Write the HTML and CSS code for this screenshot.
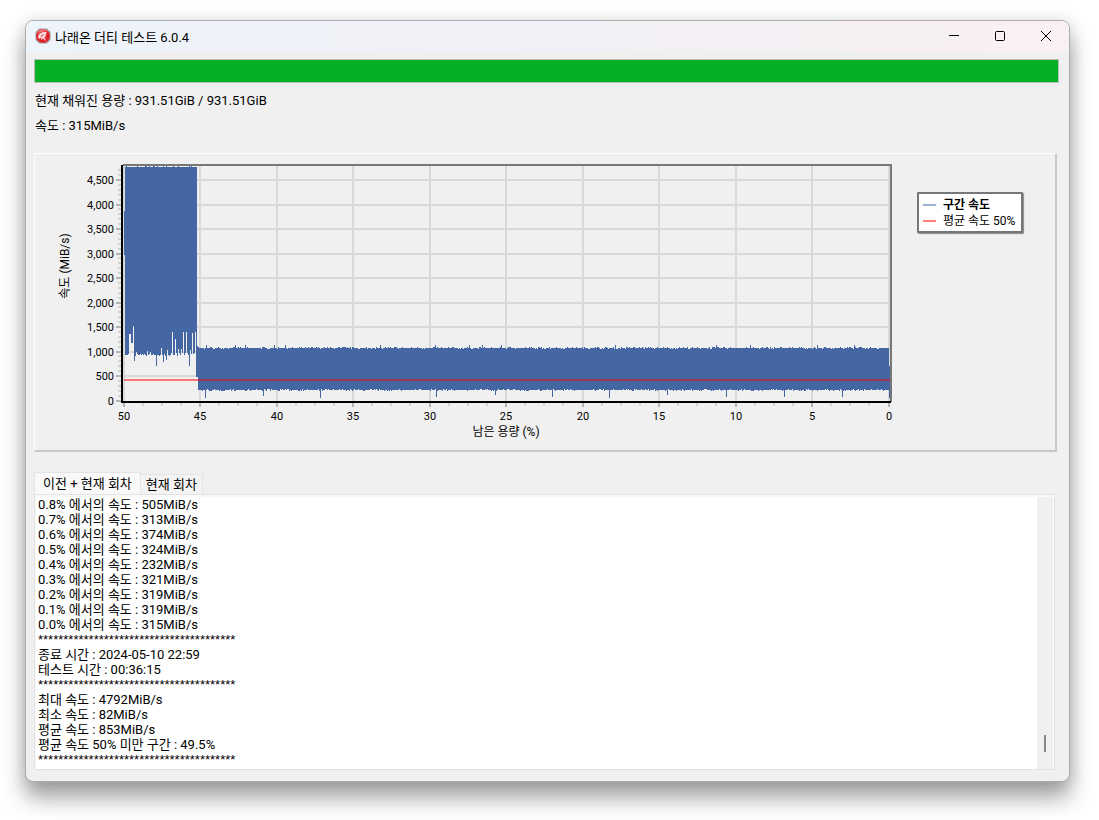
FILE: index.html
```html
<!DOCTYPE html>
<html lang="ko">
<head>
    <meta charset="UTF-8">
    <meta name="viewport" content="width=device-width, initial-scale=1.0">
    <title>나래온 더티 테스트 6.0.4</title>
    <link rel="stylesheet" href="styles.css">
</head>
<body>

<div class="window">
    <header class="titlebar">
        <svg class="app-icon" viewBox="0 0 16 16" aria-hidden="true">
            <path d="M4 0.500H12L15.500 4V12L12 15.500H4L0.500 12V4Z" fill="#a4a4a8"/>
            <circle cx="8" cy="8" r="7" fill="#df252c"/>
            <path d="M2 6A6.500 6.500 0 0 1 13 3.500C9 3 5 4 2 6Z" fill="#f3777a"/>
            <path d="M3 9.500C3 6 7 3 12 4.500L10.500 6L12 6.500L10 7.500L11 9L9.500 9L11 13L8 10.500L6.500 12L6 9.500L4.500 11Z" fill="#fbd9d9"/>
            <path d="M6 8.500L8.500 6.500" stroke="#df252c" stroke-width="1"/>
        </svg>
        <h1>나래온 더티 테스트 6.0.4</h1>
        <div class="window-buttons">
            <button type="button" aria-label="최소화">
                <svg viewBox="0 0 12 12"><path d="M1 5.500H11"/></svg>
            </button>
            <button type="button" aria-label="최대화">
                <svg viewBox="0 0 12 12"><rect x="1.500" y="1.500" width="9" height="9" rx="1"/></svg>
            </button>
            <button type="button" aria-label="닫기">
                <svg viewBox="0 0 12 12"><path d="M1 1L11 11M11 1L1 11"/></svg>
            </button>
        </div>
    </header>

    <main>
        <progress value="100" max="100" aria-label="진행률"></progress>
        <div class="status">
            <p>현재 채워진 용량 : 931.51GiB / 931.51GiB</p>
            <p>속도 : 315MiB/s</p>
        </div>

        <section class="chart-panel">
            <svg class="chart" viewBox="0 0 870 296" role="img" aria-label="구간 속도">
                <g id="grid" class="grid"></g>
                <g id="ticks" class="ticks"></g>
                <path class="frame" d="M88 11H856V248"/>
                <path id="speed" class="speed"/>
                <path class="average" d="M89 226H855"/>
                <path class="axis" d="M87 11V248H856"/>
                <g id="labels" class="labels"></g>
                <text class="axis-title" x="471" y="282">남은 용량 (%)</text>
                <text class="axis-title" transform="translate(34 112) rotate(-90)">속도 (MiB/s)</text>
            </svg>
            <ul class="legend">
                <li class="series-speed">구간 속도</li>
                <li class="series-average">평균 속도 50%</li>
            </ul>
        </section>

        <section class="result">
            <div class="tabs" role="tablist">
                <button type="button" class="tab active" role="tab" aria-selected="true">이전 + 현재 회차</button>
                <button type="button" class="tab" role="tab" aria-selected="false">현재 회차</button>
            </div>
            <div class="tab-page" role="tabpanel">
                <div class="log" role="log">
                    <p>0.8% 에서의 속도 : 505MiB/s</p>
                    <p>0.7% 에서의 속도 : 313MiB/s</p>
                    <p>0.6% 에서의 속도 : 374MiB/s</p>
                    <p>0.5% 에서의 속도 : 324MiB/s</p>
                    <p>0.4% 에서의 속도 : 232MiB/s</p>
                    <p>0.3% 에서의 속도 : 321MiB/s</p>
                    <p>0.2% 에서의 속도 : 319MiB/s</p>
                    <p>0.1% 에서의 속도 : 319MiB/s</p>
                    <p>0.0% 에서의 속도 : 315MiB/s</p>
                    <p class="stars">***************************************</p>
                    <p>종료 시간 : 2024-05-10 22:59</p>
                    <p>테스트 시간 : 00:36:15</p>
                    <p class="stars">***************************************</p>
                    <p>최대 속도 : 4792MiB/s</p>
                    <p>최소 속도 : 82MiB/s</p>
                    <p>평균 속도 : 853MiB/s</p>
                    <p>평균 속도 50% 미만 구간 : 49.5%</p>
                    <p class="stars">***************************************</p>
                </div>
                <div class="scrollbar"><div class="thumb"></div></div>
            </div>
        </section>
    </main>
</div>

<script>
    // plot area inside the svg
    const LEFT = 89, RIGHT = 854, TOP = 12, BOTTOM = 247;

    function toX(percent) {
        return Math.floor(RIGHT - percent * (RIGHT - LEFT) / 50);
    }

    function toY(speed) {
        return Math.floor(BOTTOM - speed * 0.049);
    }

    function path(parent, d, className) {
        const el = document.createElementNS('http://www.w3.org/2000/svg', 'path');
        el.setAttribute('d', d);
        if (className) el.setAttribute('class', className);
        document.getElementById(parent).appendChild(el);
    }

    function label(text, x, y, anchor) {
        const el = document.createElementNS('http://www.w3.org/2000/svg', 'text');
        el.setAttribute('x', x);
        el.setAttribute('y', y);
        el.setAttribute('text-anchor', anchor);
        el.textContent = text;
        document.getElementById('labels').appendChild(el);
    }

    for (let speed = 0; speed <= 4700; speed += 100) {
        const y = toY(speed);
        if (speed % 500 === 0) {
            if (speed > 0) path('grid', `M${LEFT} ${y}H${RIGHT}`);
            path('ticks', `M81 ${y}H86`);
            label(speed.toLocaleString('en-US'), 79, y + 4, 'end');
        } else {
            path('ticks', `M83 ${y}H86`, 'minor');
        }
    }

    for (let percent = 0; percent <= 50; percent += 1.25) {
        const x = toX(percent);
        if (percent % 5 === 0) {
            path('grid', `M${x} ${TOP}V${BOTTOM}`);
            path('ticks', `M${x} 249V253`);
            label(percent, x, 266, 'middle');
        } else {
            path('ticks', `M${x} 249V252`, 'minor');
        }
    }

    // fixed seed so the graph is the same on every load
    let seed = 7;
    function random() {
        seed = (seed * 16807) % 2147483647;
        return seed / 2147483647;
    }

    // lower ends of the cache section, one per column
    const cacheLow = [
        201, 201, 201, 200, 180, 180, 189, 189, 172, 207, 202, 198, 200, 201, 201,
        200, 201, 200, 201, 200, 201, 202, 197, 201, 200, 198, 201, 201, 200, 201,
        201, 212, 201, 201, 202, 201, 194, 201, 208, 200, 202, 206, 196, 201, 202,
        201, 199, 178, 201, 201, 185, 199, 202, 195, 199, 201, 195, 199, 178, 201,
        199, 178, 199, 201, 212, 196, 200, 179, 200, 199, 178, 201
    ];
    let bars = 'M89 57h1v44h-1z';
    cacheLow.forEach((low, i) => {
        const top = random() > 0.8 ? 12 : 13;
        bars += `M${90 + i} ${top}h1V${low}h-1z`;
    });
    bars += 'M161 192h2v31h-2z';

    // short drops, column: lower end
    const drops = {170: 244, 228: 242, 285: 244, 401: 243, 460: 241, 517: 243, 574: 244, 632: 241, 691: 243, 749: 243, 807: 243};
    for (let x = 163; x < 854; x++) {
        const r = random();
        const top = r > 0.98 ? 191 : r > 0.8 ? 193 : r > 0.1 ? 194 : 195;
        const s = random();
        const low = drops[x] || (s > 0.85 ? 237 : s > 0.15 ? 236 : 235);
        bars += `M${x} ${top}h1V${low}h-1z`;
    }
    bars += 'M854 212h1v32h-1z';
    document.getElementById('speed').setAttribute('d', bars);
</script>

</body>
</html>
```

FILE: styles.css
```css
* {
    box-sizing: border-box;
}

body {
    margin: 0;
    padding: 20px 29px 38px 25px;
    background-color: #fff;
    color: #000;
    font-family: Roboto, "Noto Sans CJK KR", sans-serif;
    font-size: 13px;
}

p, h1, ul {
    margin: 0;
    padding: 0;
}

button {
    font-family: inherit;
    font-size: 13px;
    color: #000;
    padding: 0;
    border: none;
    background: none;
}

.window {
    background-color: #f0f0f0;
    border: 1px solid #acacac;
    border-radius: 8px;
    box-shadow: 0 16px 22px rgba(0, 0, 0, 0.36), 0 0 16px rgba(0, 0, 0, 0.12);
    overflow: hidden;
}

.titlebar {
    display: flex;
    align-items: center;
    height: 30px;
    padding-left: 9px;
    background: linear-gradient(to right, #edf4fa, #f3f0f6 60%, #f9f0f1);
}

.app-icon {
    width: 16px;
    height: 16px;
    margin-right: 4px;
}

h1 {
    font-size: 13px;
    font-weight: normal;
}

.window-buttons {
    display: flex;
    margin-left: auto;
}

.window-buttons button {
    display: flex;
    align-items: center;
    justify-content: center;
    width: 46px;
    height: 28px;
}

.window-buttons svg {
    width: 12px;
    height: 12px;
    fill: none;
    stroke: #000;
}

main {
    padding: 8px 10px 11px 8px;
}

progress {
    display: block;
    width: 100%;
    height: 24px;
    appearance: none;
    border: 1px solid #bcbcbc;
}

progress::-webkit-progress-bar {
    background-color: #e6e6e6;
}

progress::-webkit-progress-value {
    background-color: #06b025;
}

.status {
    margin: 5px 0 15px 1px;
    line-height: 25px;
}

/* chart */
.chart-panel {
    display: flex;
    align-items: flex-start;
    margin-right: 2px;
    border: 1px solid #fff;
    border-right: 2px solid #c8c8c8;
    border-bottom: 2px solid #c8c8c8;
}

.chart {
    display: block;
    flex: 1;
    min-width: 0;
    font-size: 11px;
}

.chart path {
    stroke-width: 2;
    fill: none;
}

.chart .grid path {
    stroke: #d8d8d8;
}

.chart .ticks path {
    stroke: #b4b4b4;
}

.chart .ticks .minor {
    stroke: #b4b4b4;
    stroke-width: 1;
}

.chart .frame {
    stroke: #777;
}

.chart .axis {
    stroke: #000;
}

.chart .speed {
    fill: #4466a3;
    stroke: none;
    shape-rendering: crispEdges;
}

.chart .average {
    stroke: #ff0000;
    stroke-opacity: 0.5;
}

.axis-title {
    font-size: 12px;
    text-anchor: middle;
}

.legend {
    width: 106px;
    margin: 38px 32px 0 12px;
    padding: 3px 4px 2px;
    list-style: none;
    background-color: #fff;
    border: 2px solid #777;
    border-radius: 1px;
    box-shadow: 1px 1px 1px #888;
    font-size: 12px;
    line-height: 16px;
    white-space: nowrap;
}

.legend li {
    display: flex;
    align-items: center;
    gap: 7px;
}

.legend li::before {
    content: "";
    width: 13px;
    height: 2px;
    background-color: #9fb1d2;
}

.legend .series-speed {
    font-weight: bold;
}

.legend .series-average::before {
    background-color: #ff7f7f;
}

/* tabs and log */
.result {
    margin: 20px 4px 0 0;
}

.tabs {
    display: flex;
    align-items: flex-end;
    height: 22px;
}

.tab {
    height: 20px;
    padding: 0 5px;
    border: 1px solid #e4e4e4;
    border-left: none;
    border-bottom: none;
    background-color: #f3f3f3;
    line-height: 18px;
}

.tab.active {
    height: 22px;
    padding: 0 8px;
    border-left: 1px solid #e4e4e4;
    background-color: #f9f9f9;
}

.tab-page {
    display: flex;
    padding: 2px 1px 0;
    border: 1px solid #e2e2e2;
    background-color: #f9f9f9;
}

.log {
    flex: 1;
    padding: 0 0 2px 2px;
    background-color: #fff;
    line-height: 15px;
}

.log p {
    height: 15px;
}

.stars {
    font-family: "Liberation Sans", Arial, sans-serif;
}

.scrollbar {
    display: flex;
    align-items: flex-end;
    justify-content: center;
    width: 16px;
    padding-bottom: 17px;
    background-color: #f0f0f0;
}

.thumb {
    width: 2px;
    height: 17px;
    background-color: #868686;
}
```
